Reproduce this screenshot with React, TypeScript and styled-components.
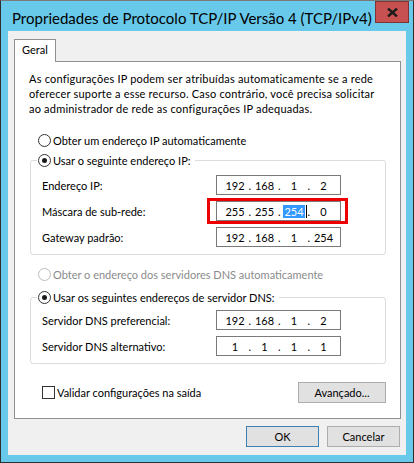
import styled, { createGlobalStyle } from 'styled-components'

const GlobalStyle = createGlobalStyle`
  html, body {
    margin: 0;
    padding: 0;
    background: #fff;
  }
  body {
    font-family: Lato, 'Noto Sans', sans-serif;
    font-size: 11px;
    color: #000;
  }
  * {
    box-sizing: border-box;
  }
`

const Window = styled.div`
  width: 414px;
  height: 463px;
  display: flex;
  flex-direction: column;
  border: 1px solid #2e2e2e;
  border-top-color: #7a7a7a;
  background: #69c9eb;
  padding: 0 7px 7px;
`

const TitleBar = styled.div`
  height: 30px;
  display: flex;
  align-items: flex-start;
  justify-content: space-between;
`

const Title = styled.div`
  padding: 2px 0 0 4px;
  font-size: 15px;
  line-height: 30px;
  white-space: nowrap;
  color: #000;
`

const CloseButton = styled.div`
  width: 34px;
  height: 22px;
  margin-right: -3px;
  background: #c75050;
  border: 1px solid #7d3434;
  display: flex;
  align-items: center;
  justify-content: center;
`

const Client = styled.div`
  flex: 1;
  background: #f0f0f0;
  display: flex;
  flex-direction: column;
  padding: 8px 5px 8px 6px;
`

const TabStrip = styled.div`
  display: flex;
`

const Tab = styled.div`
  position: relative;
  z-index: 1;
  height: 23px;
  margin-bottom: -1px;
  padding: 0 7px;
  background: #fff;
  border: 1px solid #8e9096;
  border-bottom: none;
  line-height: 20px;
`

const Panel = styled.div`
  height: 358px;
  background: #fff;
  border: 1px solid #8e9096;
  padding: 9px 14px 0 14px;
`

const Intro = styled.p`
  margin: 0;
  line-height: 15px;
  letter-spacing: 0.2px;
  white-space: nowrap;
`

const OptionRow = styled.div<{ $top: number; $disabled?: boolean }>`
  display: flex;
  align-items: center;
  height: 16px;
  margin-top: ${(p) => p.$top}px;
  padding-left: 9px;
  color: ${(p) => (p.$disabled ? '#8b8b8b' : '#000')};
  white-space: nowrap;
`

const Radio = styled.span<{ $checked?: boolean; $disabled?: boolean }>`
  width: 13px;
  height: 13px;
  margin-right: 2px;
  border-radius: 50%;
  border: 1px solid ${(p) => (p.$disabled ? '#bcbcbc' : '#333')};
  background: #fff;
  display: flex;
  align-items: center;
  justify-content: center;
  flex-shrink: 0;

  &::after {
    content: '';
    display: ${(p) => (p.$checked ? 'block' : 'none')};
    width: 5px;
    height: 5px;
    border-radius: 50%;
    background: #1a1a1a;
  }
`

const Group = styled.div<{ $top: number; $gap: number }>`
  margin: ${(p) => p.$top}px 0 0 1px;
  border: 1px solid #dcdcdc;
  border-radius: 3px;
  padding-bottom: 7px;

  & > div:nth-child(2) {
    margin-top: ${(p) => p.$gap}px;
  }
`

const Legend = styled.div`
  display: flex;
  align-items: center;
  width: fit-content;
  height: 16px;
  margin: -9px 0 0 6px;
  padding: 0 4px 0 1px;
  background: #fff;
  white-space: nowrap;
`

const Fields = styled.div`
  display: grid;
  grid-template-columns: 174px 125px;
  row-gap: 6px;
  align-items: center;
  padding-left: 11px;
`

const Label = styled.span`
  white-space: nowrap;
`

const IpBox = styled.div`
  position: relative;
  height: 20px;
  display: flex;
  align-items: center;
  padding-left: 6px;
  border: 1px solid #7a7a7a;
  background: #fff;
`

const Octet = styled.span`
  width: 24px;
  display: flex;
  justify-content: center;
  align-items: center;
`

const Dot = styled.span`
  width: 5.5px;
  text-align: center;
`

const Selected = styled.span`
  background: #3399ff;
  color: #fff;
  line-height: 13px;
  padding: 0 1px;
`

const Caret = styled.span`
  width: 1px;
  height: 13px;
  margin-left: 1px;
  margin-right: -2px;
  background: #000;
`

const Highlight = styled.span`
  position: absolute;
  left: -10px;
  right: -8px;
  top: -4px;
  bottom: -4px;
  border: 3px solid #ee0000;
  pointer-events: none;
`

const BottomRow = styled.div`
  display: flex;
  align-items: center;
  justify-content: space-between;
  margin-top: 18px;
  padding-left: 13px;
`

const CheckLabel = styled.label`
  display: flex;
  align-items: center;
  white-space: nowrap;
`

const CheckBox = styled.span`
  width: 13px;
  height: 13px;
  margin-right: 2px;
  border: 1px solid #333;
  background: #fff;
`

const Button = styled.button<{ $default?: boolean; $width: number }>`
  width: ${(p) => p.$width}px;
  height: 21px;
  padding: 0;
  font-family: inherit;
  font-size: 11px;
  color: #000;
  background: #e1e1e1;
  border: 1px solid ${(p) => (p.$default ? '#3c7fb1' : '#adadad')};
  border-radius: 0;
`

const Footer = styled.div`
  display: flex;
  justify-content: flex-end;
  gap: 8px;
  margin-top: 7px;
  padding-right: 1px;
`

type IpProps = { value: string[]; selected?: number; marked?: boolean }

const IpField = ({ value, selected, marked }: IpProps) => (
  <IpBox>
    {value.map((v, i) => (
      <span key={i} style={{ display: 'contents' }}>
        <Octet>
          {selected === i ? (
            <>
              <Selected>{v}</Selected>
              <Caret />
            </>
          ) : (
            v
          )}
        </Octet>
        {i < 3 && <Dot>.</Dot>}
      </span>
    ))}
    {marked && <Highlight />}
  </IpBox>
)

const CloseIcon = () => (
  <svg width='11' height='9' viewBox='0 0 11 9'>
    <path d='M1 0.5 L10 8.5 M10 0.5 L1 8.5' stroke='#1c1c1c' strokeWidth='2.4' />
  </svg>
)

const App = () => {
  return (
    <>
      <GlobalStyle />
      <Window>
        <TitleBar>
          <Title>Propriedades de Protocolo TCP/IP Versão 4 (TCP/IPv4)</Title>
          <CloseButton>
            <CloseIcon />
          </CloseButton>
        </TitleBar>
        <Client>
          <TabStrip>
            <Tab>Geral</Tab>
          </TabStrip>
          <Panel>
            <Intro>
              As configurações IP podem ser atribuídas automaticamente se a rede
              <br />
              oferecer suporte a esse recurso. Caso contrário, você precisa solicitar
              <br />
              ao administrador de rede as configurações IP adequadas.
            </Intro>
            <OptionRow $top={16}>
              <Radio />
              Obter um endereço IP automaticamente
            </OptionRow>
            <Group $top={12} $gap={7}>
              <Legend>
                <Radio $checked />
                Usar o seguinte endereço IP:
              </Legend>
              <Fields>
                <Label>Endereço IP:</Label>
                <IpField value={['192', '168', '1', '2']} />
                <Label>Máscara de sub-rede:</Label>
                <IpField value={['255', '255', '254', '0']} selected={2} marked />
                <Label>Gateway padrão:</Label>
                <IpField value={['192', '168', '1', '254']} />
              </Fields>
            </Group>
            <OptionRow $top={11} $disabled>
              <Radio $disabled />
              Obter o endereço dos servidores DNS automaticamente
            </OptionRow>
            <Group $top={15} $gap={5}>
              <Legend>
                <Radio $checked />
                Usar os seguintes endereços de servidor DNS:
              </Legend>
              <Fields>
                <Label>Servidor DNS preferencial:</Label>
                <IpField value={['192', '168', '1', '2']} />
                <Label>Servidor DNS alternativo:</Label>
                <IpField value={['1', '1', '1', '1']} />
              </Fields>
            </Group>
            <BottomRow>
              <CheckLabel>
                <CheckBox />
                Validar configurações na saída
              </CheckLabel>
              <Button $width={88}>Avançado...</Button>
            </BottomRow>
          </Panel>
          <Footer>
            <Button $default $width={73}>
              OK
            </Button>
            <Button $width={73}>Cancelar</Button>
          </Footer>
        </Client>
      </Window>
    </>
  )
}

export default App
